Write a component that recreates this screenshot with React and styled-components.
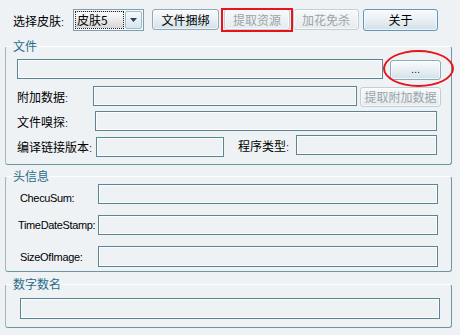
import React from 'react';
import styled, { createGlobalStyle } from 'styled-components';

const CJK = `"Noto Sans CJK SC", "Liberation Sans", sans-serif`;
const LATIN = `"Liberation Sans", "Noto Sans CJK SC", sans-serif`;
const BG = '#eef2f5';

const Global = createGlobalStyle`
  html, body { margin: 0; padding: 0; background: ${BG}; }
  body { font-family: ${CJK}; }
`;

const Window = styled.div`
  width: 460px;
  height: 335px;
  box-sizing: border-box;
  padding-top: 9px;
  background: ${BG};
  overflow: hidden;
`;

const Toolbar = styled.div`
  display: flex;
  align-items: flex-start;
  height: 22px;
  padding-left: 13px;
`;

const Label = styled.span`
  flex: none;
  width: ${(p) => p.$w}px;
  margin-left: ${(p) => p.$ml || 0}px;
  padding-top: ${(p) => p.$pt || 0}px;
  font-family: ${(p) => (p.$latin ? LATIN : CJK)};
  font-size: ${(p) => (p.$latin ? 11 : 12)}px;
  letter-spacing: ${(p) => (p.$latin ? '-0.35px' : '0')};
  line-height: 14px;
  color: #000;
  white-space: nowrap;
`;

const Colon = styled.span`
  font-family: ${LATIN};
  font-size: 11px;
  color: #3a1a4a;
`;

const Combo = styled.div`
  display: flex;
  width: 71px;
  height: 22px;
  box-sizing: border-box;
  border: 1px solid #7d9eac;
  background: #f7f9fa;
  padding: 1px;
`;

const ComboText = styled.div`
  flex: 1;
  display: flex;
  align-items: center;
  padding-left: 1px;
  border: 1px dotted #222;
  background: linear-gradient(#fbfbfb, #e9e9e9 55%, #d6d6d6);
  font: 12px/1 ${CJK};
  color: #000;
`;

const ComboButton = styled.div`
  width: 17px;
  margin-left: 1px;
  display: flex;
  align-items: center;
  justify-content: center;
  box-sizing: border-box;
  border: 1px solid #9fbccb;
  border-radius: 2px;
  background: linear-gradient(#f5f9fb, #d8e6ed);
`;

const Button = styled.button`
  flex: none;
  box-sizing: border-box;
  width: ${(p) => p.$w}px;
  height: ${(p) => p.$h || 21}px;
  margin: ${(p) => p.$mt || 0}px 0 0 ${(p) => p.$ml || 0}px;
  padding: 0;
  font: 12px/1 ${CJK};
  color: #000;
  border: 1px solid ${(p) => (p.$default ? '#5f98bb' : '#8eaaba')};
  border-radius: 3px;
  background: linear-gradient(#f9fbfc, #e8eff3 50%, #d3e1e8);
  box-shadow: inset 0 0 0 1px rgba(255, 255, 255, 0.6);
  cursor: default;

  &:disabled {
    color: #9aa4aa;
    border-color: #c4cfd5;
    background: linear-gradient(#f7f9fa, #e6ebee);
  }
`;

const Dots = styled.span`
  font: 11px/1 ${LATIN};
  color: #1a1a5a;
  position: relative;
  top: -2px;
`;

const Marked = styled.span`
  position: relative;
  display: flex;
  margin-left: ${(p) => p.$ml || 0}px;
  margin-top: ${(p) => p.$mt || 0}px;

  &::after {
    content: '';
    position: absolute;
    pointer-events: none;
    border: 2px solid #e8141c;
    ${(p) =>
      p.$ellipse
        ? `left:-7px; right:-13px; top:-10px; bottom:-7px; border-radius:50%;`
        : `left:-3px; right:-3px; top:-1px; bottom:-2px;`}
  }
`;

const Group = styled.section`
  position: relative;
  box-sizing: border-box;
  width: 447px;
  height: ${(p) => p.$h}px;
  margin: ${(p) => p.$mt}px 0 0 5px;
  padding: ${(p) => p.$pt}px 0 0 ${(p) => p.$pl}px;
  border: 1px solid #6f95a2;
  border-top-color: #ffffff;
  border-left-color: #9fb7c0;
  border-radius: 3px;
  display: flex;
  flex-direction: column;
  gap: ${(p) => p.$gap || 0}px;
`;

const GroupTitle = styled.span`
  position: absolute;
  top: -8px;
  left: 6px;
  padding: 0 1px;
  background: ${BG};
  font: 12px/14px ${CJK};
  color: #2a6b87;
`;

const Row = styled.div`
  display: flex;
  align-items: flex-start;
  height: 20px;
  margin-top: ${(p) => p.$mt || 0}px;
`;

const Field = styled.input`
  flex: none;
  box-sizing: border-box;
  width: ${(p) => p.$w}px;
  height: ${(p) => p.$h || 20}px;
  margin: ${(p) => p.$mt || 0}px 0 0 ${(p) => p.$ml || 0}px;
  padding: 0 3px;
  border: 1px solid #5a8694;
  border-radius: 0;
  background: ${BG};
  box-shadow: inset 0 0 0 1px #fafcfd;
  font: 12px ${LATIN};
  outline: none;
`;

const Caret = () => (
  <svg width="7" height="4" viewBox="0 0 7 4">
    <path d="M0 0H7L3.5 4Z" fill="#2b3f6b" />
  </svg>
);

const L = ({ children, ...rest }) => (
  <Label {...rest}>
    {children}
    <Colon>:</Colon>
  </Label>
);

export default function App() {
  return (
    <>
      <Global />
      <Window>
        <Toolbar>
          <L $w={60} $pt={5}>选择皮肤</L>
          <Combo>
            <ComboText>皮肤5</ComboText>
            <ComboButton>
              <Caret />
            </ComboButton>
          </Combo>
          <Button $w={67} $ml={8}>文件捆绑</Button>
          <Marked $ml={5}>
            <Button $w={66} disabled>提取资源</Button>
          </Marked>
          <Button $w={66} $ml={3} disabled>加花免杀</Button>
          <Button $w={75} $ml={4} $h={22} $default>关于</Button>
        </Toolbar>

        <Group $mt={15} $h={119} $pt={12} $pl={11}>
          <GroupTitle>文件</GroupTitle>
          <Row>
            <Field $w={366} readOnly />
            <Marked $ml={7} $mt={1} $ellipse>
              <Button $w={51} $h={20}>
                <Dots>...</Dots>
              </Button>
            </Marked>
          </Row>
          <Row $mt={7}>
            <L $w={76} $pt={4}>附加数据</L>
            <Field $w={264} readOnly />
            <Button $w={81} $h={20} $ml={3} $mt={1} disabled>提取附加数据</Button>
          </Row>
          <Row $mt={5}>
            <L $w={78} $pt={4}>文件嗅探</L>
            <Field $w={342} readOnly />
          </Row>
          <Row $mt={5}>
            <L $w={79} $pt={4}>编译链接版本</L>
            <Field $w={128} $mt={1} readOnly />
            <L $w={58} $ml={14} $pt={3}>程序类型</L>
            <Field $w={141} $mt={-1} readOnly />
          </Row>
        </Group>

        <Group $mt={11} $h={96} $pt={7} $pl={14} $gap={11}>
          <GroupTitle>头信息</GroupTitle>
          <Row>
            <Label $w={78} $latin $pt={7}>ChecuSum:</Label>
            <Field $w={340} readOnly />
          </Row>
          <Row>
            <Label $w={80} $ml={-2} $latin $pt={3}>TimeDateStamp:</Label>
            <Field $w={340} readOnly />
          </Row>
          <Row>
            <Label $w={78} $latin $pt={4}>SizeOfImage:</Label>
            <Field $w={340} $h={21} readOnly />
          </Row>
        </Group>

        <Group $mt={12} $h={44} $pt={13} $pl={14}>
          <GroupTitle>数字数名</GroupTitle>
          <Row>
            <Field $w={420} $h={21} readOnly />
          </Row>
        </Group>
      </Window>
    </>
  );
}
